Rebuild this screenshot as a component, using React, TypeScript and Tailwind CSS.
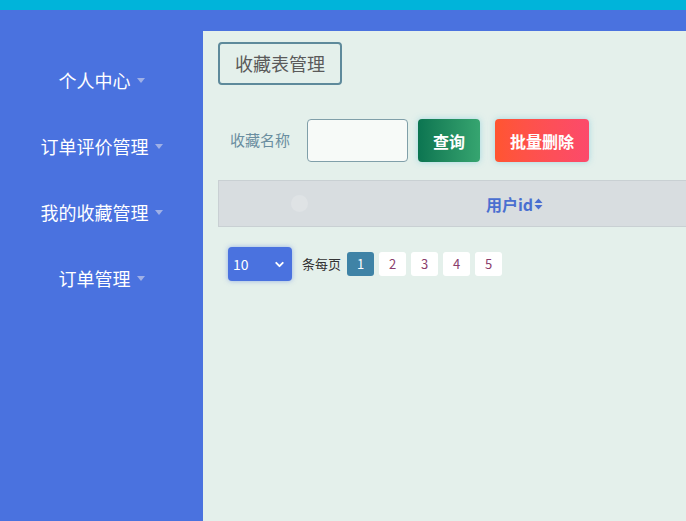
import { ChevronDown } from 'lucide-react';

const menus = ['个人中心', '订单评价管理', '我的收藏管理', '订单管理'];
const pages = [1, 2, 3, 4, 5];

const Caret = () => (
  <span className="ml-[6px] inline-block h-0 w-0 border-x-[4px] border-t-[5px] border-x-transparent border-t-[#9fb0e6] align-middle" />
);

const SortIcon = () => (
  <svg width="9" height="12" viewBox="0 0 9 12" className="ml-[1px] inline-block">
    <path d="M4.5 0.5 L8.5 5 H0.5 Z" fill="#4a6fd0" />
    <path d="M4.5 11.5 L8.5 7 H0.5 Z" fill="#4a6fd0" />
  </svg>
);

export default function App() {
  return (
    <div
      className="flex h-[521px] w-[686px] flex-col overflow-hidden bg-[#4a72df]"
      style={{ fontFamily: '"Noto Sans CJK SC", "Microsoft YaHei", sans-serif' }}
    >
      {/* top strip */}
      <div className="h-[10px] shrink-0 bg-[#00b4da]" />

      <div className="flex min-h-0 flex-1">
        {/* sidebar */}
        <aside className="flex w-[203px] shrink-0 flex-col items-center pt-[52px]">
          {menus.map((m) => (
            <div key={m} className="flex h-[66px] items-start justify-center text-[18px] leading-[36px] text-white">
              <span>{m}</span>
              <span className="flex h-[36px] items-center">
                <Caret />
              </span>
            </div>
          ))}
        </aside>

        {/* main */}
        <main className="mt-[21px] flex-1 bg-[#e4f0eb] pl-[15px] pt-[11px]">
          <div className="inline-flex h-[43px] w-[124px] items-center justify-center rounded-[4px] border-2 border-[#5e8a9b] text-[18px] text-[#5a5a5a]">
            收藏表管理
          </div>

          <div className="mt-[34px] flex items-center">
            <span className="ml-[12px] w-[77px] text-[15px] text-[#6a8ea0]">收藏名称</span>
            <input className="h-[43px] w-[101px] rounded-[4px] border border-[#809fa9] bg-[#f7faf8] outline-none" />
            <button className="ml-[10px] h-[43px] w-[62px] rounded-[4px] bg-gradient-to-r from-[#0b7551] to-[#36a570] text-[16px] font-bold text-white shadow-[0_0_6px_rgba(120,200,220,0.6)]">
              查询
            </button>
            <button className="ml-[15px] h-[43px] w-[94px] rounded-[4px] bg-gradient-to-r from-[#ff5530] to-[#fc4a6b] text-[16px] font-bold text-white shadow-[0_0_6px_rgba(120,200,220,0.6)]">
              批量删除
            </button>
          </div>

          <div className="mt-[18px] flex h-[47px] items-center border border-r-0 border-[#c9d0d3] bg-[#d8dde0]">
            <span className="ml-[72px] h-[17px] w-[17px] shrink-0 rounded-full bg-[#dfe3e5]" />
            <div className="ml-[178px] flex items-center text-[16px] font-bold text-[#4a6fd0]">
              用户id
              <SortIcon />
            </div>
          </div>

          <div className="mt-[20px] flex items-center">
            <div className="ml-[10px] flex h-[34px] w-[64px] items-center justify-between rounded-[4px] bg-[#4a72df] pl-[5px] pr-[6px] text-[14px] text-white shadow-[0_0_5px_rgba(74,114,223,0.5)]">
              <span>10</span>
              <ChevronDown size={13} strokeWidth={3.5} />
            </div>
            <span className="ml-[10px] text-[13px] text-[#333]">条每页</span>
            <div className="ml-[6px] flex gap-[5px]">
              {pages.map((p) =>
                p === 1 ? (
                  <span key={p} className="flex h-[24px] w-[27px] items-center justify-center rounded-[3px] bg-[#3f83a6] text-[13px] text-white">
                    {p}
                  </span>
                ) : (
                  <span key={p} className="flex h-[24px] w-[27px] items-center justify-center rounded-[3px] bg-white text-[13px] text-[#8a3d6c]">
                    {p}
                  </span>
                )
              )}
            </div>
          </div>
        </main>
      </div>
    </div>
  );
}
